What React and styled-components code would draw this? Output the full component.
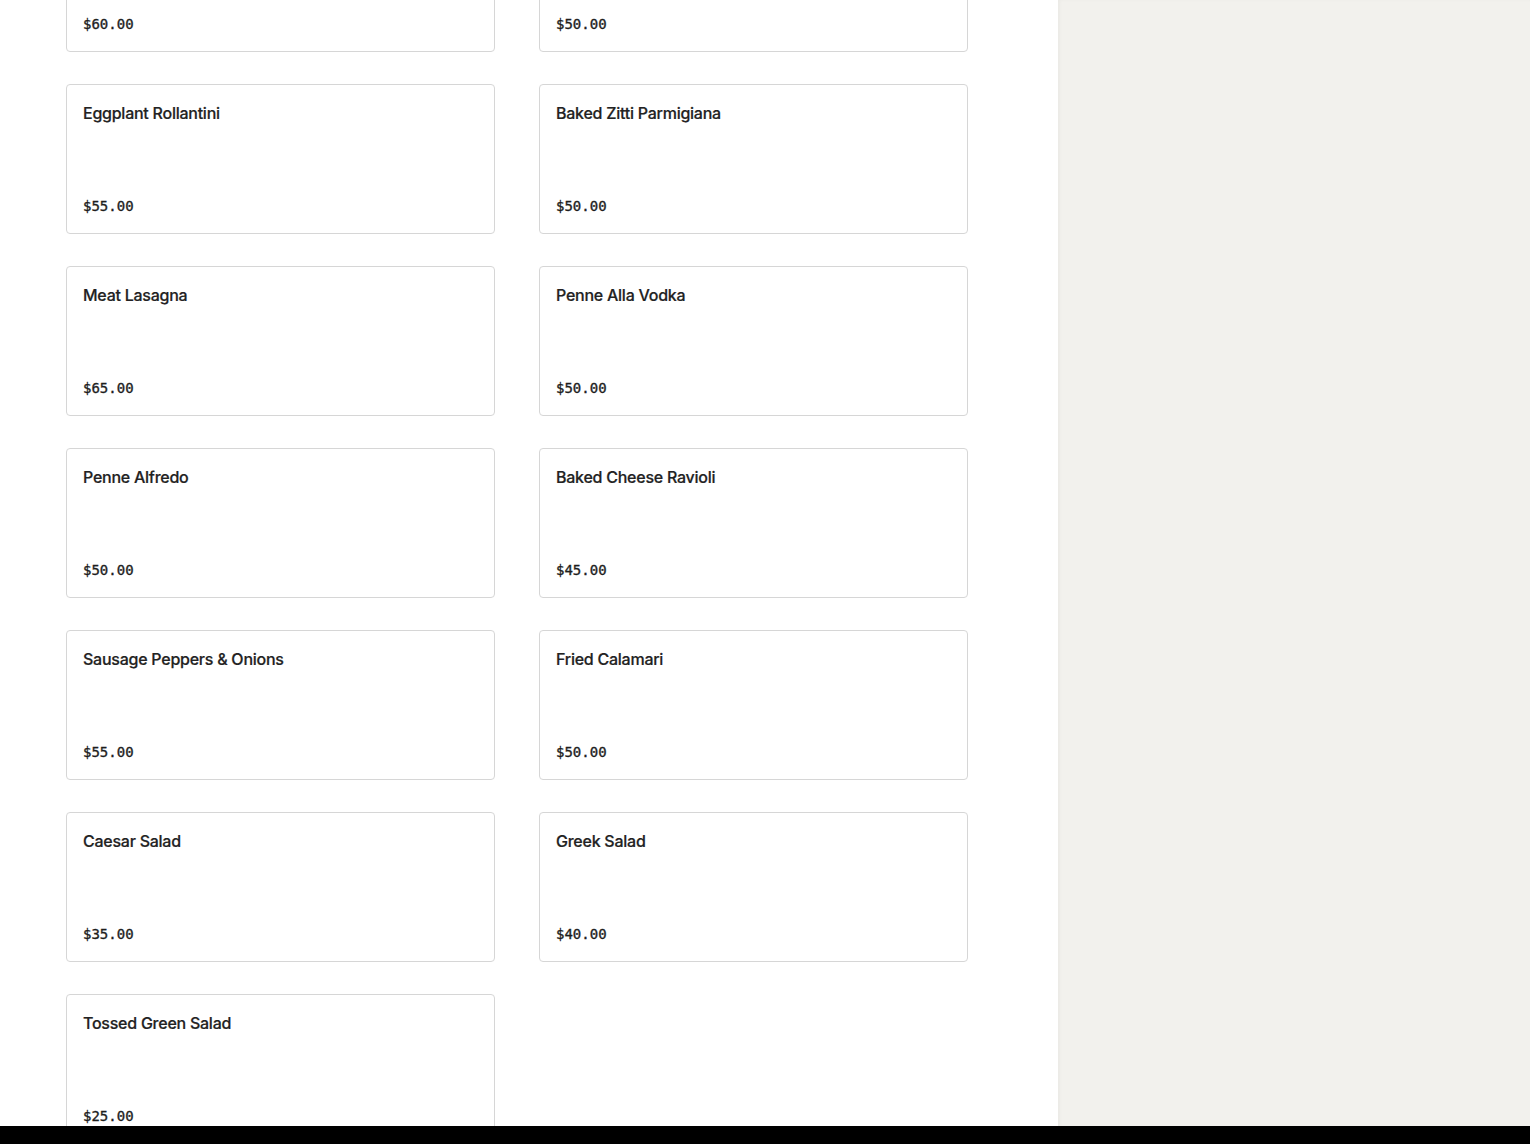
import React from 'react';
import styled, { createGlobalStyle } from 'styled-components';

const GlobalStyle = createGlobalStyle`
  html, body {
    margin: 0;
    padding: 0;
    background: #ffffff;
    overflow: hidden;
  }
  * {
    box-sizing: border-box;
  }
`;

const Page = styled.div`
  display: flex;
  height: 100vh;
  overflow: hidden;
`;

const Main = styled.main`
  width: 1058px;
  flex-shrink: 0;
  background: #ffffff;
  padding: 0 90px 0 66px;
`;

const SidePanel = styled.aside`
  flex: 1;
  background: #f2f1ed;
  box-shadow: inset 2px 0 3px rgba(0, 0, 0, 0.03);
`;

// the list is scrolled down, so the first row sits partly above the top edge
const Grid = styled.div`
  display: grid;
  grid-template-columns: repeat(2, 429px);
  column-gap: 44px;
  row-gap: 32px;
  margin-top: -98px;
`;

const ItemCard = styled.div`
  height: 150px;
  border: 1px solid #d6d6d6;
  border-radius: 4px;
  padding: 16px 16px 17px;
  display: flex;
  flex-direction: column;
  justify-content: space-between;
  background: #ffffff;
`;

const ItemName = styled.h4`
  margin: 0;
  font-family: 'Inter', 'Liberation Sans', sans-serif;
  font-size: 16px;
  line-height: 24px;
  font-weight: 500;
  color: #222222;
  letter-spacing: -0.25px;
  -webkit-text-stroke: 0.2px #222222;
`;

const ItemPrice = styled.span`
  font-family: 'DejaVu Sans Mono', 'Liberation Mono', monospace;
  font-size: 14px;
  line-height: 20px;
  font-weight: 400;
  color: #1e1e1e;
  -webkit-text-stroke: 0.35px #1e1e1e;
`;

const BottomBar = styled.div`
  position: fixed;
  left: 0;
  right: 0;
  bottom: 0;
  height: 18px;
  background: #000000;
`;

const items = [
  { name: 'Chicken Marsala', price: 60 },
  { name: 'Chicken Francese', price: 50 },
  { name: 'Eggplant Rollantini', price: 55 },
  { name: 'Baked Zitti Parmigiana', price: 50 },
  { name: 'Meat Lasagna', price: 65 },
  { name: 'Penne Alla Vodka', price: 50 },
  { name: 'Penne Alfredo', price: 50 },
  { name: 'Baked Cheese Ravioli', price: 45 },
  { name: 'Sausage Peppers & Onions', price: 55 },
  { name: 'Fried Calamari', price: 50 },
  { name: 'Caesar Salad', price: 35 },
  { name: 'Greek Salad', price: 40 },
  { name: 'Tossed Green Salad', price: 25 },
];

export default function App() {
  return (
    <>
      <GlobalStyle />
      <Page>
        <Main>
          <Grid>
            {items.map(item => (
              <ItemCard key={item.name}>
                <ItemName>{item.name}</ItemName>
                <ItemPrice>${item.price.toFixed(2)}</ItemPrice>
              </ItemCard>
            ))}
          </Grid>
        </Main>
        <SidePanel />
      </Page>
      <BottomBar />
    </>
  );
}
